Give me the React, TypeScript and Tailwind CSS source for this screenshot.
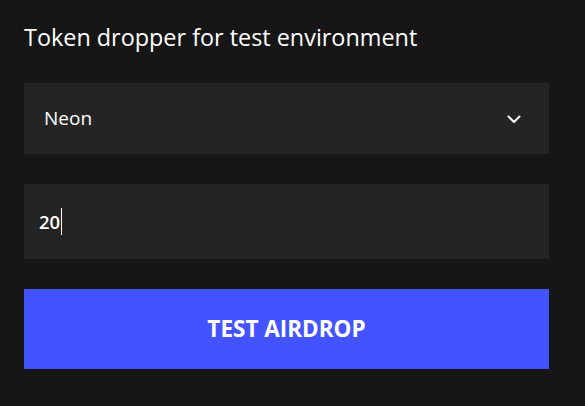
export default function App() {
  return (
    <div
      className="min-h-screen w-[585px] h-[406px] bg-[#161616] text-white"
      style={{ fontFamily: '"Open Sans", "Noto Sans", sans-serif' }}
    >
      <div className="w-[525px] ml-6 pt-[22px] flex flex-col">
        <h1 className="text-[23.4px] leading-[30px] font-normal">Token dropper for test environment</h1>

        {/* Token select */}
        <div className="mt-[31px] h-[71px] bg-[#242424] flex items-center justify-between pl-5 pr-7">
          <span className="text-[19px]">Neon</span>
          <svg width="14" height="9" viewBox="0 0 14 9" fill="none" className="mt-[1px]">
            <path d="M1.5 1.5 L7 7 L12.5 1.5" stroke="white" strokeWidth="2" strokeLinecap="round" strokeLinejoin="round" />
          </svg>
        </div>

        {/* Amount */}
        <div className="mt-[30px] h-[75px] bg-[#242424] flex items-center pl-[15px]">
          <span className="text-[18.5px] font-semibold">20</span>
          <span className="w-px h-[27px] bg-white ml-px" />
        </div>

        {/* Action */}
        <button className="mt-[30px] h-[80px] bg-[#4353ff] text-[22.5px] font-bold">
          TEST AIRDROP
        </button>
      </div>
    </div>
  )
}
